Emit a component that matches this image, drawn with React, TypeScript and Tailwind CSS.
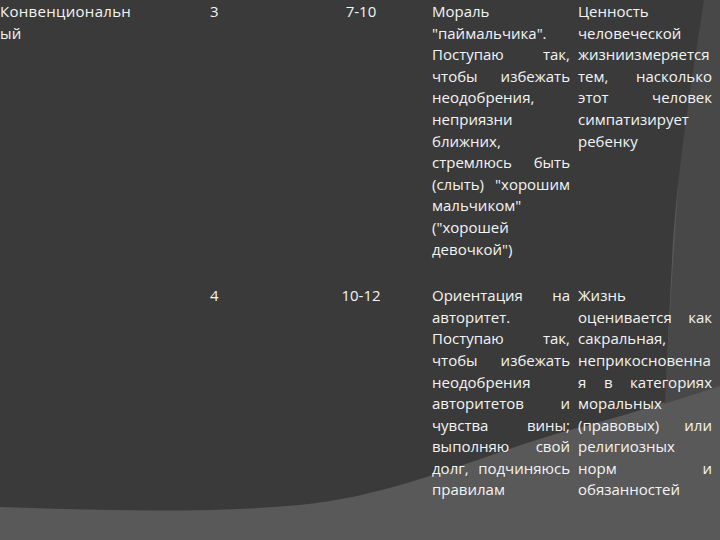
import React from 'react';

type Line = { t: string; j?: boolean };

const L = (t: string, j = false): Line => ({ t, j });

const rows = [
  {
    id: '1',
    stage: ['Конвенциональн', 'ый'],
    level: '3',
    age: '7-10',
    moral: [
      L('Мораль'),
      L('"паймальчика".'),
      L('Поступаю так,', true),
      L('чтобы избежать', true),
      L('неодобрения,'),
      L('неприязни'),
      L('ближних,'),
      L('стремлюсь быть', true),
      L('(слыть) "хорошим', true),
      L('мальчиком"'),
      L('("хорошей'),
      L('девочкой")'),
    ],
    value: [
      L('Ценность'),
      L('человеческой'),
      L('жизниизмеряется'),
      L('тем, насколько', true),
      L('этот человек', true),
      L('симпатизирует'),
      L('ребенку'),
    ],
  },
  {
    id: '2',
    stage: [],
    level: '4',
    age: '10-12',
    moral: [
      L('Ориентация на', true),
      L('авторитет.'),
      L('Поступаю так,', true),
      L('чтобы избежать', true),
      L('неодобрения'),
      L('авторитетов и', true),
      L('чувства вины;', true),
      L('выполняю свой', true),
      L('долг, подчиняюсь', true),
      L('правилам'),
    ],
    value: [
      L('Жизнь'),
      L('оценивается как', true),
      L('сакральная,'),
      L('неприкосновенна'),
      L('я в категориях', true),
      L('моральных'),
      L('(правовых) или', true),
      L('религиозных'),
      L('норм и', true),
      L('обязанностей'),
    ],
  },
];

const Lines: React.FC<{ lines: Line[] }> = ({ lines }) => (
  <div>
    {lines.map((l, i) => (
      <div key={i} className={l.j ? 'text-justify [text-align-last:justify] whitespace-nowrap' : 'whitespace-nowrap'}>
        {l.t}
      </div>
    ))}
  </div>
);

// slide theme backdrop: dark sweep over a lighter floor
const Background: React.FC = () => (
  <svg className="absolute inset-0" width="720" height="540" viewBox="0 0 720 540">
    <rect width="720" height="540" fill="#595959" />
    <path d="M690 0 H720 V386 L664 404 Z" fill="#484848" />
    <path
      d="M0 0 H704 C690 90 676 180 672 260 C669 320 667 360 665 402 C630 414 600 422 570 430 C480 455 400 495 300 505 C200 514 100 510 0 507 Z"
      fill="#3a3a3a"
    />
  </svg>
);

const App: React.FC = () => {
  return (
    <div className="relative w-[720px] h-[540px] overflow-hidden bg-[#3a3a3a] text-[#f4f4f4] font-['Open_Sans',sans-serif] text-[15px] leading-[21.6px]">
      <Background />
      <div className="relative flex flex-col pt-[1px]">
        {rows.map((r, idx) => (
          <div key={r.id} className={`grid grid-cols-[150px_140px_142px_146px_134px] ${idx > 0 ? 'mt-[25px]' : ''}`}>
            <div className="tracking-[0.3px]">
              {r.stage.map((s, i) => (
                <div key={i}>{s}</div>
              ))}
            </div>
            <div className="pl-[60px]">{r.level}</div>
            <div className="text-center">{r.age}</div>
            <div className="pr-[8px]">
              <Lines lines={r.moral} />
            </div>
            <div>
              <Lines lines={r.value} />
            </div>
          </div>
        ))}
      </div>
    </div>
  );
};

export default App;
